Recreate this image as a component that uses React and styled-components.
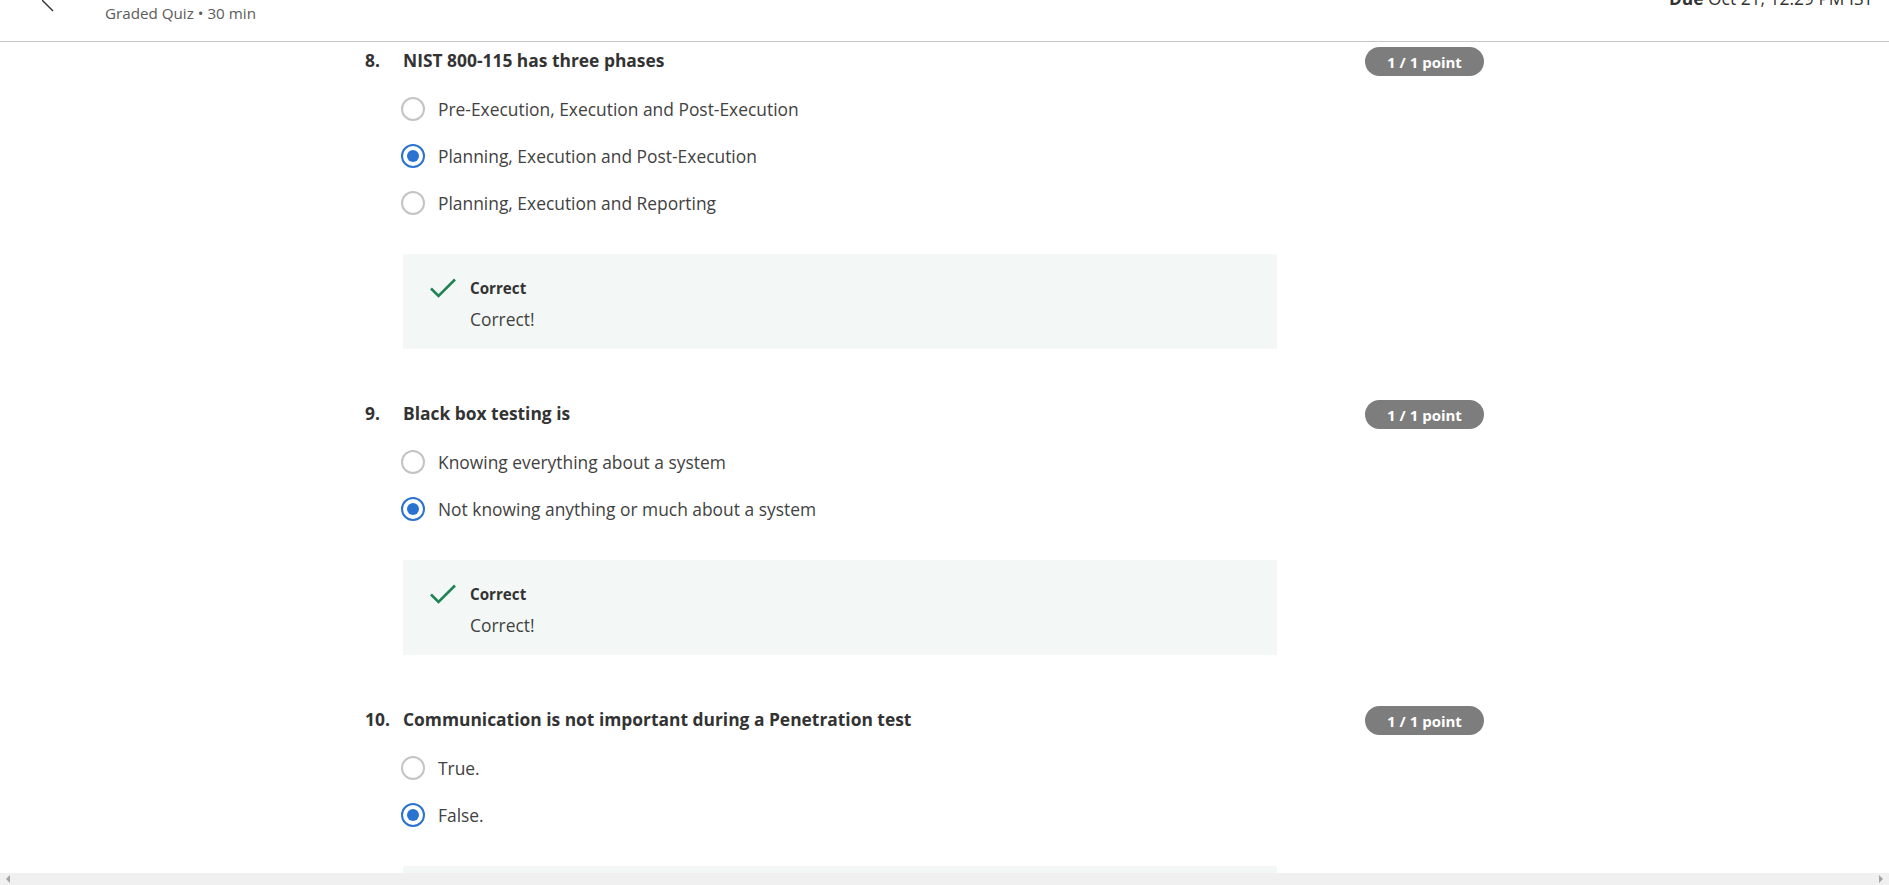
import React from 'react';
import styled, { createGlobalStyle } from 'styled-components';

const GlobalStyle = createGlobalStyle`
  html, body {
    margin: 0;
    padding: 0;
    height: 100%;
    overflow: hidden;
    background: #fff;
  }
  body {
    font-family: "Open Sans", "Noto Sans", Arial, sans-serif;
    color: #333;
  }
`;

const Page = styled.div`
  height: 100vh;
  display: flex;
  flex-direction: column;
`;

const Header = styled.header`
  height: 41px;
  flex-shrink: 0;
  border-bottom: 1px solid #c6c6c6;
  display: flex;
  align-items: flex-start;
  padding: 0 16px 0 42px;
  overflow: hidden;
`;

const BackMark = styled.svg`
  width: 12px;
  height: 12px;
  flex-shrink: 0;
`;

const QuizMeta = styled.div`
  margin-left: 51px;
  margin-top: 2px;
  font-size: 15.2px;
  line-height: 22px;
  color: #5b5b5b;
`;

const DueText = styled.div`
  margin-left: auto;
  margin-top: -15px;
  font-size: 17.4px;
  line-height: 26px;
  color: #333;
  b {
    font-weight: 700;
  }
`;

const Main = styled.main`
  flex: 1;
  overflow: hidden;
  padding: 6px 0 0 365px;
`;

const Question = styled.section`
  display: grid;
  grid-template-columns: 38px 874px 88px 119px;
  margin-bottom: 52px;
`;

const Number = styled.div`
  font-size: 17.4px;
  font-weight: 700;
  line-height: 24px;
  color: #333;
`;

const Title = styled.h3`
  margin: 0 0 14px;
  font-size: 17.4px;
  font-weight: 700;
  line-height: 24px;
  color: #333;
`;

const Badge = styled.div`
  grid-column: 4;
  height: 29px;
  margin-top: -1px;
  border-radius: 15px;
  background: #7d7d7d;
  color: #fff;
  font-size: 15px;
  font-weight: 700;
  display: flex;
  align-items: center;
  justify-content: center;
`;

const Option = styled.label`
  height: 47px;
  display: flex;
  align-items: center;
  gap: 13px;
  font-size: 17.4px;
  color: #424242;
  padding-bottom: 1px;
  box-sizing: border-box;
`;

const Radio = styled.span`
  width: 24px;
  height: 24px;
  box-sizing: border-box;
  border-radius: 50%;
  border: 2px solid ${(p) => (p.checked ? '#2a73d0' : '#c4c4c4')};
  display: flex;
  align-items: center;
  justify-content: center;
  flex-shrink: 0;
  margin-left: -2px;
  &::after {
    content: '';
    width: 12px;
    height: 12px;
    border-radius: 50%;
    background: #2a73d0;
    display: ${(p) => (p.checked ? 'block' : 'none')};
  }
`;

const Feedback = styled.div`
  margin-top: 27px;
  height: 95px;
  box-sizing: border-box;
  background: #f3f8f6;
  padding: 23px 24px 0 26px;
  display: flex;
  gap: 13px;
`;

const CheckIcon = styled.svg`
  width: 28px;
  height: 22px;
  flex-shrink: 0;
`;

const FeedbackLabel = styled.div`
  font-size: 15.2px;
  font-weight: 700;
  line-height: 22px;
  color: #333;
`;

const FeedbackText = styled.div`
  font-size: 17.4px;
  line-height: 24px;
  margin-top: 8px;
  color: #424242;
`;

const ScrollTrack = styled.div`
  height: 12px;
  flex-shrink: 0;
  background: #f0f0f0;
  display: flex;
  align-items: center;
  justify-content: space-between;
  padding: 0 6px;
`;

const Arrow = styled.span`
  width: 0;
  height: 0;
  border-top: 4px solid transparent;
  border-bottom: 4px solid transparent;
  ${(p) => (p.dir === 'left' ? 'border-right: 4px solid #a3a3a3;' : 'border-left: 4px solid #a3a3a3;')}
`;

const questions = [
  {
    n: '8.',
    title: 'NIST 800-115 has three phases',
    options: [
      'Pre-Execution, Execution and Post-Execution',
      'Planning, Execution and Post-Execution',
      'Planning, Execution and Reporting',
    ],
    picked: 1,
  },
  {
    n: '9.',
    title: 'Black box testing is',
    options: ['Knowing everything about a system', 'Not knowing anything or much about a system'],
    picked: 1,
  },
  {
    n: '10.',
    title: 'Communication is not important during a Penetration test',
    options: ['True.', 'False.'],
    picked: 1,
  },
];

const QuizQuestion = ({ q }) => (
  <Question>
    <Number>{q.n}</Number>
    <div>
      <Title>{q.title}</Title>
      {q.options.map((o, i) => (
        <Option key={o}>
          <Radio checked={i === q.picked} />
          {o}
        </Option>
      ))}
      <Feedback>
        <CheckIcon viewBox="0 0 28 22">
          <path d="M2 11.5 L9.5 19 L26 2.5" fill="none" stroke="#1f8354" strokeWidth="2.6" />
        </CheckIcon>
        <div>
          <FeedbackLabel>Correct</FeedbackLabel>
          <FeedbackText>Correct!</FeedbackText>
        </div>
      </Feedback>
    </div>
    <Badge>1 / 1 point</Badge>
  </Question>
);

export default function App() {
  return (
    <Page>
      <GlobalStyle />
      <Header>
        <BackMark viewBox="0 0 12 12">
          <path d="M0 0 L11 11" stroke="#333" strokeWidth="1.4" fill="none" />
        </BackMark>
        <QuizMeta>Graded Quiz • 30 min</QuizMeta>
        <DueText>
          <b>Due</b> Oct 21, 12:29 PM IST
        </DueText>
      </Header>
      <Main>
        {questions.map((q) => (
          <QuizQuestion key={q.n} q={q} />
        ))}
      </Main>
      <ScrollTrack>
        <Arrow dir="left" />
        <Arrow dir="right" />
      </ScrollTrack>
    </Page>
  );
}
